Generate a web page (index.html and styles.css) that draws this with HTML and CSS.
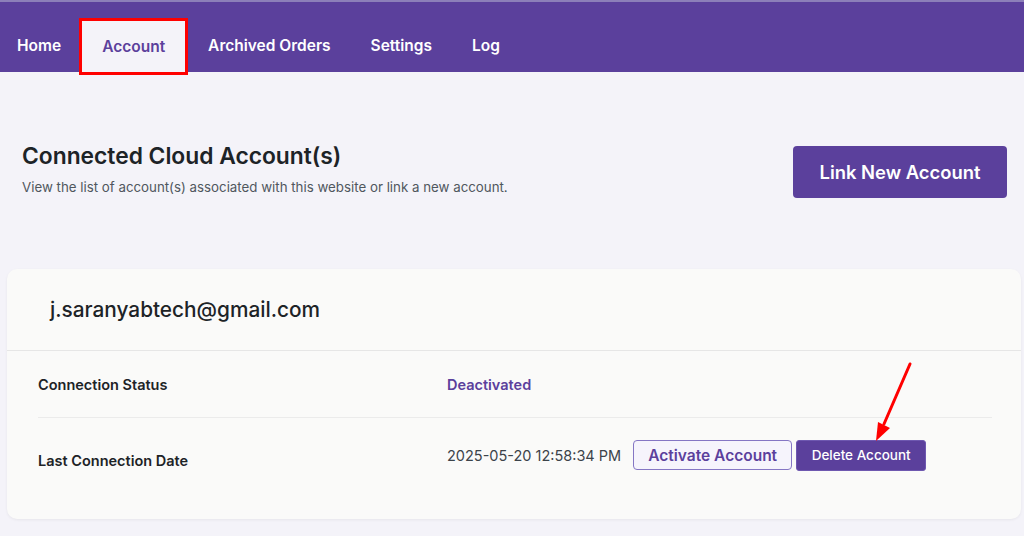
FILE: index.html
```html
<!DOCTYPE html>
<html lang="en">
<head>
<meta charset="utf-8">
<title>Account</title>
<link rel="stylesheet" href="styles.css">
</head>
<body>
<nav class="topnav">
  <a class="nav-item first">Home</a>
  <a class="nav-item active">Account</a>
  <a class="nav-item">Archived Orders</a>
  <a class="nav-item">Settings</a>
  <a class="nav-item">Log</a>
</nav>

<section class="page-head">
  <div class="head-text">
    <h1 class="title">Connected Cloud Account(s)</h1>
    <p class="subtitle">View the list of account(s) associated with this website or link a new account.</p>
  </div>
  <button class="btn-link">Link New Account</button>
</section>

<section class="card">
  <div class="card-head">j.saranyabtech@gmail.com</div>
  <div class="card-body">
    <div class="row">
      <div class="label">Connection Status</div>
      <div class="value status">Deactivated</div>
    </div>
    <div class="row last">
      <div class="label">Last Connection Date</div>
      <div class="value actions">
        <span class="date">2025-05-20 12:58:34 PM</span>
        <button class="btn-outline">Activate Account</button>
        <button class="btn-solid">Delete Account</button>
      </div>
    </div>
  </div>
</section>

<svg class="arrow" width="60" height="90" viewBox="0 0 60 90">
  <line x1="50" y1="6" x2="24" y2="66" stroke="#ff0000" stroke-width="3" stroke-linecap="round"/>
  <polygon points="16,83 18,64 30,70" fill="#ff0000"/>
</svg>
</body>
</html>
```

FILE: styles.css
```css
* { box-sizing: border-box; }
html, body { margin: 0; padding: 0; }
body {
  background: #f4f3f9;
  font-family: Inter, "Noto Sans", sans-serif;
  color: #1d2327;
  width: 1024px;
  height: 536px;
  overflow: hidden;
  position: relative;
}
.topnav {
  display: flex;
  align-items: stretch;
  height: 72px;
  background: #5b409c;
  border-top: 2px solid #8c7fb9;
  padding-top: 16px;
}
.nav-item {
  display: flex;
  align-items: center;
  padding: 0 20px;
  color: #ffffff;
  font-size: 15.5px;
  font-weight: 600;
  height: 54px;
}
.nav-item.first { padding-left: 17px; padding-right: 20px; }
.nav-item.active {
  background: #f4f3f9;
  color: #5b409c;
  border: 3px solid #ff0000;
  padding: 0 20px;
  height: 57px;
  margin-left: -2px;
  margin-bottom: -1px;
}
.page-head {
  display: flex;
  justify-content: space-between;
  align-items: flex-start;
  padding: 0 17px 0 22px;
  height: 197px;
}
.title {
  margin: 70px 0 0;
  font-size: 22.8px;
  font-weight: 600;
  line-height: 28px;
  color: #1d2327;
}
.subtitle {
  margin: 8px 0 0;
  font-size: 13.3px;
  line-height: 18px;
  color: #50575e;
}
.btn-link {
  margin-top: 74px;
  width: 214px;
  height: 52px;
  border: none;
  border-radius: 4px;
  background: #5b409c;
  color: #ffffff;
  font-family: inherit;
  font-size: 18.4px;
  font-weight: 600;
}
.card {
  margin: 0 3px 0 7px;
  background: #fafaf9;
  border-radius: 10px;
  box-shadow: 0 1px 3px rgba(0,0,0,0.06);
  height: 250px;
}
.card-head {
  height: 82px;
  display: flex;
  align-items: center;
  padding-left: 43px;
  font-size: 20.8px;
  font-weight: 500;
  color: #1d2327;
  border-bottom: 1px solid #e6e6e6;
}
.card-body { padding: 0 29px 0 31px; }
.row {
  display: grid;
  grid-template-columns: 409px 1fr;
  align-items: center;
  height: 67px;
  border-bottom: 1px solid #ebebeb;
}
.row.last { height: 84px; border-bottom: none; }
.label {
  font-size: 14.5px;
  font-weight: 600;
  color: #1d2327;
}
.status {
  font-size: 14.5px;
  font-weight: 600;
  color: #5b409c;
}
.actions {
  display: flex;
  align-items: center;
  padding-bottom: 10px;
}
.date {
  font-size: 14.5px;
  color: #3c434a;
  margin-right: 12px;
}
.btn-outline {
  width: 159px;
  height: 30px;
  border: 1px solid #8576c4;
  border-radius: 4px;
  background: #f6f4fc;
  color: #5b409c;
  font-family: inherit;
  font-size: 15.5px;
  font-weight: 600;
  padding: 0;
  margin-right: 4px;
}
.btn-solid {
  width: 130px;
  height: 31px;
  border: 1px solid #6e58b0;
  border-radius: 3px;
  background: #5b409c;
  color: #ffffff;
  font-family: inherit;
  font-size: 13.5px;
  font-weight: 500;
  padding: 0;
}
.arrow {
  position: absolute;
  left: 860px;
  top: 358px;
}
```
